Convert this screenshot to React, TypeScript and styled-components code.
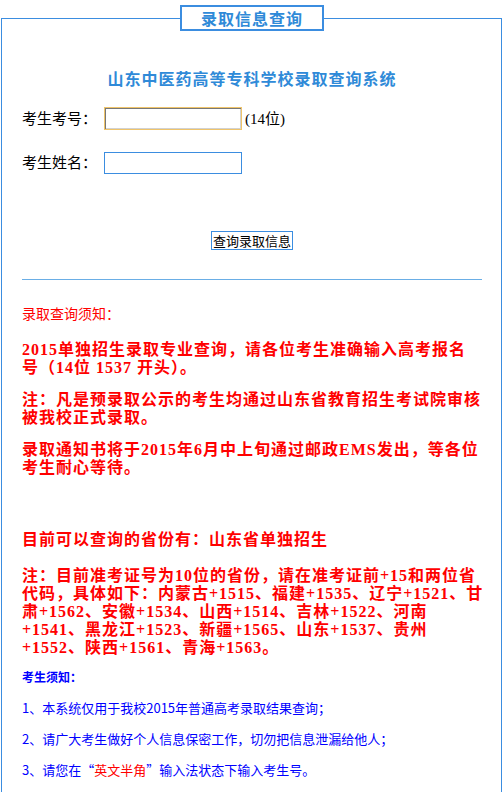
import React from "react";
import styled, { createGlobalStyle } from "styled-components";

const GlobalStyle = createGlobalStyle`
  body {
    margin: 0;
    background: #ffffff;
    font-family: "Liberation Serif", "Noto Sans CJK SC", serif;
  }
`;

const App = () => {
  return (
    <div>
      <GlobalStyle />
      <Box>
        <Tab>录取信息查询</Tab>

        <Title>山东中医药高等专科学校录取查询系统</Title>

        <Row>
          <Label>考生考号：</Label>
          <Input type="text" focused />
          <Hint>(14位)</Hint>
        </Row>
        <Row second>
          <Label>考生姓名：</Label>
          <Input type="text" />
        </Row>

        <Submit type="button">查询录取信息</Submit>

        <Line />

        <NoticeHead>录取查询须知：</NoticeHead>
        <Notice first>
          2015单独招生录取专业查询，请各位考生准确输入高考报名
          <br />
          号（14位 1537 开头）。
        </Notice>
        <Notice>
          注：凡是预录取公示的考生均通过山东省教育招生考试院审核
          <br />
          被我校正式录取。
        </Notice>
        <Notice>
          录取通知书将于2015年6月中上旬通过邮政EMS发出，等各位
          <br />
          考生耐心等待。
        </Notice>

        <Province>目前可以查询的省份有：山东省单独招生</Province>
        <Notice first>
          注：目前准考证号为10位的省份，请在准考证前+15和两位省
          <br />
          代码，具体如下：内蒙古+1515、福建+1535、辽宁+1521、甘
          <br />
          肃+1562、安徽+1534、山西+1514、吉林+1522、河南
          <br />
          +1541、黑龙江+1523、新疆+1565、山东+1537、贵州
          <br />
          +1552、陕西+1561、青海+1563。
        </Notice>

        <TipsHead>考生须知：</TipsHead>
        <Tip>1、本系统仅用于我校2015年普通高考录取结果查询；</Tip>
        <Tip>2、请广大考生做好个人信息保密工作，切勿把信息泄漏给他人；</Tip>
        <Tip>
          3、请您在“<Mark>英文半角</Mark>”输入法状态下输入考生号。
        </Tip>
      </Box>
    </div>
  );
};

export default App;

const Box = styled.fieldset`
  margin: 5px 1px 0;
  padding: 0 19px 40px 20px;
  border: 1px solid #3b8de0;
  min-width: 0;
`;

const Tab = styled.legend`
  margin: 0 auto;
  box-sizing: border-box;
  width: 144px;
  height: 26px;
  padding: 0;
  border: 2px solid #3b8de0;
  background: #ffffff;
  color: #2f8ad8;
  font-family: "Noto Sans CJK SC", sans-serif;
  font-size: 16px;
  font-weight: bold;
  letter-spacing: 1px;
  line-height: 22px;
  text-align: center;
`;

const Title = styled.div`
  margin-top: 37px;
  color: #2f8ad8;
  font-family: "Noto Sans CJK SC", sans-serif;
  font-size: 16px;
  font-weight: bold;
  letter-spacing: 1px;
  line-height: 20px;
  text-align: center;
`;

const Row = styled.div<{ second?: boolean }>`
  display: flex;
  align-items: center;
  margin-top: ${(p) => (p.second ? "22px" : "19px")};
`;

const Label = styled.span`
  width: 82px;
  font-family: "Liberation Serif", "Noto Sans CJK SC", serif;
  font-size: 15px;
  line-height: 22px;
  color: #000000;
`;

const Input = styled.input<{ focused?: boolean }>`
  box-sizing: border-box;
  width: 138px;
  height: ${(p) => (p.focused ? "23px" : "22px")};
  margin: 0;
  padding: 0 3px;
  outline: none;
  background: #ffffff;
  border: 1px solid ${(p) => (p.focused ? "#efc46a" : "#3b8de0")};
  box-shadow: ${(p) =>
    p.focused ? "inset 1px 1px 0 #777777, inset -1px -1px 0 #d2d2d2" : "none"};
`;

const Hint = styled.span`
  margin-left: 3px;
  font-size: 15px;
  line-height: 22px;
  color: #000000;
`;

const Submit = styled.button`
  display: block;
  box-sizing: border-box;
  width: 82px;
  height: 19px;
  margin: 57px auto 0;
  padding: 0;
  border: 1px solid #3b8de0;
  background: #ffffff;
  color: #000000;
  font-family: "Noto Sans CJK SC", sans-serif;
  font-size: 13px;
  line-height: 17px;
`;

const Line = styled.hr`
  margin: 29px 0 0;
  border: 0;
  border-top: 1px solid #6aaee6;
  height: 0;
`;

const NoticeHead = styled.div`
  margin-top: 26px;
  color: #ff0000;
  font-size: 14px;
  line-height: 18px;
`;

const Notice = styled.p<{ first?: boolean }>`
  margin: ${(p) => (p.first ? "17px" : "14px")} 0 0;
  color: #ff0000;
  font-size: 16px;
  font-weight: bold;
  letter-spacing: 1px;
  line-height: 18px;
  white-space: nowrap;
`;

const Province = styled.div`
  margin-top: 53px;
  color: #ff0000;
  font-size: 16px;
  font-weight: bold;
  letter-spacing: 1px;
  line-height: 20px;
`;

const TipsHead = styled.div`
  margin-top: 12px;
  color: #0000ff;
  font-family: "Noto Sans CJK SC", sans-serif;
  font-size: 12px;
  font-weight: bold;
  line-height: 16px;
`;

const Tip = styled.div`
  margin-top: 15px;
  color: #0000ff;
  font-family: "Noto Sans CJK SC", sans-serif;
  font-size: 13px;
  line-height: 16px;
`;

const Mark = styled.span`
  color: #ff0000;
`;
